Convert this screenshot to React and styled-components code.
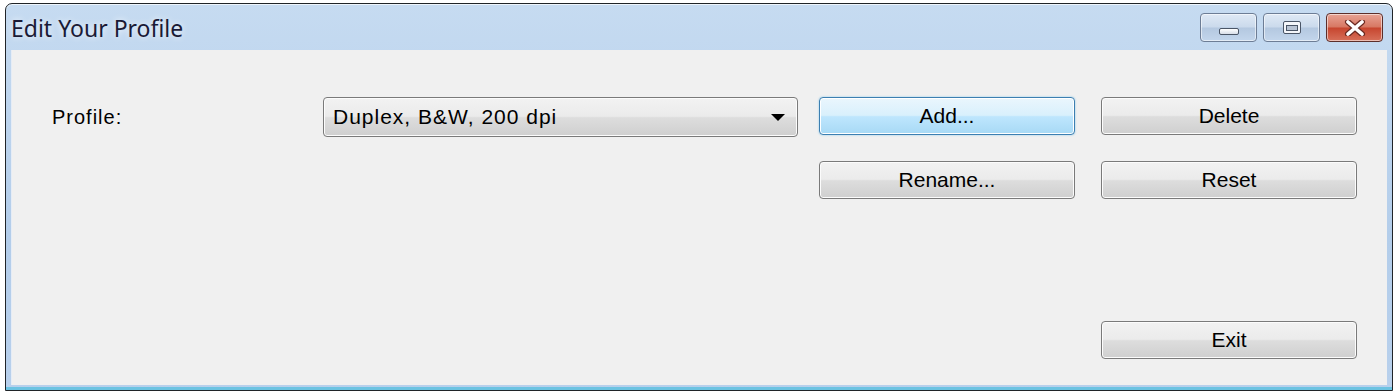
import styled, { createGlobalStyle, css } from 'styled-components';

const GlobalStyle = createGlobalStyle`
  html, body {
    margin: 0;
    padding: 0;
    background: #ffffff;
  }
  body {
    width: 1398px;
    height: 392px;
    overflow: hidden;
  }
`;

export default function App() {
  return (
    <>
      <GlobalStyle />
      <Page>
        <Window>
          <TitleBar>
            <Title>Edit Your Profile</Title>
            <Caption>
              <CaptionBtn>
                <MinGlyph />
              </CaptionBtn>
              <CaptionBtn>
                <MaxGlyph />
              </CaptionBtn>
              <CaptionBtn $close>
                <svg width="22" height="16" viewBox="0 0 22 16">
                  <path
                    d="M4 2 L18 14 M18 2 L4 14"
                    stroke="#6b2a22"
                    strokeWidth="6"
                    strokeLinecap="round"
                  />
                  <path
                    d="M4 2 L18 14 M18 2 L4 14"
                    stroke="#ffffff"
                    strokeWidth="3.6"
                    strokeLinecap="round"
                  />
                </svg>
              </CaptionBtn>
            </Caption>
          </TitleBar>
          <Client>
            <Form>
              <Label>Profile:</Label>
              <Combo>
                <span>Duplex, B&amp;W, 200 dpi</span>
                <Arrow />
              </Combo>
              <Button $focused>Add...</Button>
              <Button>Delete</Button>
              <Button $col={3}>Rename...</Button>
              <Button $col={4}>Reset</Button>
              <Button $col={4} $last>
                Exit
              </Button>
            </Form>
          </Client>
        </Window>
      </Page>
    </>
  );
}

const Page = styled.div`
  width: 1398px;
  height: 392px;
  box-sizing: border-box;
  padding: 3px 5px 1px 5px;
  display: flex;
`;

const Window = styled.div`
  flex: 1;
  display: flex;
  flex-direction: column;
  border: 1px solid #202428;
  border-radius: 7px 7px 0 0;
  background: linear-gradient(180deg, #c6dbf1 0%, #b3cdea 60%, #b8d0ec 100%);
  padding: 0 5px 5px 5px;
  box-shadow: inset 0 1px 0 #eef5fc, inset 0 -3px 0 #6cc3e2;
`;

const TitleBar = styled.div`
  height: 46px;
  display: flex;
  align-items: flex-start;
  justify-content: space-between;
`;

const Title = styled.div`
  font-family: 'Noto Sans', 'Open Sans', sans-serif;
  font-size: 23px;
  color: #1a1a36;
  padding: 8px 0 0 0;
  text-shadow: 0 0 6px rgba(255, 255, 255, 0.9);
`;

const Caption = styled.div`
  display: flex;
  gap: 6px;
  padding: 9px 4px 0 0;
`;

const CaptionBtn = styled.div`
  width: 57px;
  height: 29px;
  box-sizing: border-box;
  border: 1px solid #6d7d95;
  border-radius: 4px;
  display: flex;
  align-items: center;
  justify-content: center;
  background: linear-gradient(180deg, #dfe9f5 0%, #cbdaec 48%, #b4c8e0 52%, #c3d6ec 100%);
  box-shadow: inset 0 0 0 1px rgba(255, 255, 255, 0.55);
  ${(p) =>
    p.$close &&
    css`
      border-color: #5c2e2a;
      background: linear-gradient(180deg, #e8a395 0%, #d77863 48%, #c7462f 52%, #d7705a 100%);
    `}
`;

const MinGlyph = styled.div`
  width: 20px;
  height: 7px;
  margin-top: 8px;
  box-sizing: border-box;
  border: 1px solid #4a5566;
  border-radius: 2px;
  background: linear-gradient(180deg, #ffffff, #d8dee8);
`;

const MaxGlyph = styled.div`
  width: 18px;
  height: 13px;
  box-sizing: border-box;
  border: 1px solid #4a5566;
  border-radius: 2px;
  background: #f4f6fa;
  display: flex;
  align-items: center;
  justify-content: center;
  &::after {
    content: '';
    width: 10px;
    height: 4px;
    border: 1px solid #4a5566;
    background: #b9c4d4;
  }
`;

const Client = styled.div`
  flex: 1;
  display: flex;
  background: #f0f0f0;
  border-left: 1px solid #e5ecf6;
`;

const Form = styled.div`
  flex: 1;
  display: grid;
  grid-template-columns: 271px 496px 282px 256px;
  grid-template-rows: 40px 38px 1fr 38px;
  row-gap: 24px;
  padding: 47px 0 26px 40px;
`;

const uiFont = css`
  font-family: 'Liberation Sans', Arial, sans-serif;
  color: #000;
`;

const Label = styled.div`
  ${uiFont}
  font-size: 20px;
  letter-spacing: 1px;
  align-self: center;
`;

const bevel = css`
  ${uiFont}
  box-sizing: border-box;
  border: 1px solid #7a7a7a;
  border-radius: 4px;
  background: linear-gradient(180deg, #f2f2f2 0%, #ebebeb 48%, #dddddd 52%, #cfcfcf 100%);
  box-shadow: inset 0 0 0 1px #fcfcfc;
  font-size: 21px;
`;

const Combo = styled.div`
  ${bevel}
  width: 475px;
  height: 40px;
  display: flex;
  align-items: center;
  justify-content: space-between;
  padding: 0 6px 0 9px;
  letter-spacing: 1px;
`;

const Arrow = styled.div`
  width: 0;
  height: 0;
  border-left: 7px solid transparent;
  border-right: 7px solid transparent;
  border-top: 7px solid #000;
  margin-right: 6px;
`;

const Button = styled.div`
  ${bevel}
  width: 256px;
  height: 38px;
  display: flex;
  align-items: center;
  justify-content: center;
  ${(p) => p.$col && `grid-column: ${p.$col};`}
  ${(p) => p.$last && `grid-row: 4;`}
  ${(p) =>
    p.$focused &&
    css`
      border-color: #3c7fb1;
      background: linear-gradient(180deg, #eaf6fd 0%, #d9f0fc 48%, #bee6fd 52%, #a7d9f5 100%);
      box-shadow: inset 0 0 0 1px #ffffff, 0 0 2px #7fc4ea;
    `}
`;
